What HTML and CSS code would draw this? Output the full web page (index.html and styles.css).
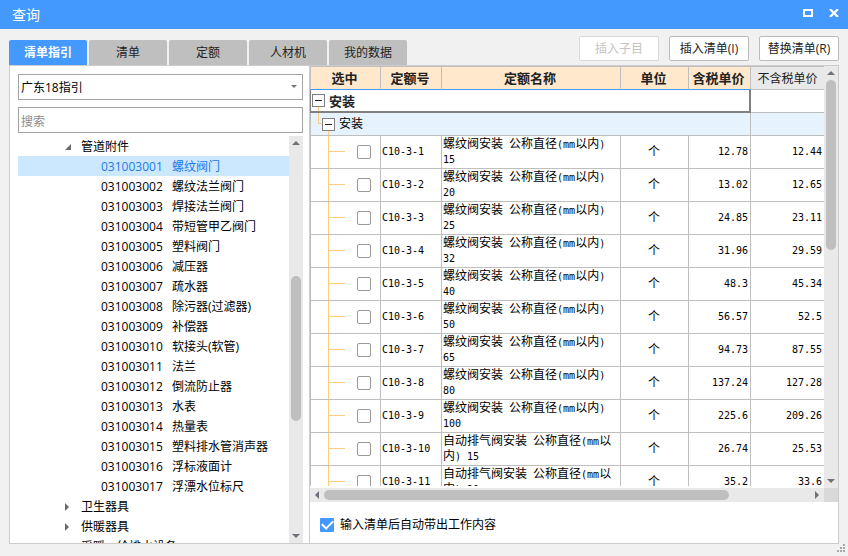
FILE: index.html
```
<!DOCTYPE html>
<html lang="zh-CN">
<head>
<meta charset="utf-8">
<title>查询</title>
<link rel="stylesheet" href="styles.css">
</head>
<body>
<header class="titlebar">
  <h1>查询</h1>
  <div class="window-buttons">
    <button type="button" aria-label="最大化"><svg width="10" height="8" viewBox="0 0 10 8"><path d="M1 1h8v6H1z" fill="none" stroke="#fff" stroke-width="2"/></svg></button>
    <button type="button" aria-label="关闭"><svg width="10" height="8" viewBox="0 0 10 8"><path d="M1 0l8 8M9 0L1 8" fill="none" stroke="#fff" stroke-width="2.2"/></svg></button>
  </div>
</header>
<div class="toolbar">
  <nav class="tabs">
    <button type="button" class="tab active">清单指引</button>
    <button type="button" class="tab">清单</button>
    <button type="button" class="tab">定额</button>
    <button type="button" class="tab">人材机</button>
    <button type="button" class="tab">我的数据</button>
  </nav>
  <div class="actions">
    <button type="button" class="btn" disabled>插入子目</button>
    <button type="button" class="btn">插入清单(I)</button>
    <button type="button" class="btn">替换清单(R)</button>
  </div>
</div>
<main class="panel">
  <section class="side">
    <div class="select-box">
      <select class="field" aria-label="指引"><option>广东18指引</option></select>
      <svg class="caret" width="6" height="3" viewBox="0 0 6 3"><path d="M0 0h6L3 3z" fill="#777"/></svg>
    </div>
    <input class="field" type="text" placeholder="搜索" aria-label="搜索">
    <div class="tree-box">
      <ul class="tree">
        <li class="branch"><svg width="7" height="7" viewBox="0 0 7 7"><path d="M6 0v6H0z" fill="#6b6b6b"/></svg>管道附件</li>
        <li class="leaf selected"><span class="code">031003001</span>螺纹阀门</li>
        <li class="leaf"><span class="code">031003002</span>螺纹法兰阀门</li>
        <li class="leaf"><span class="code">031003003</span>焊接法兰阀门</li>
        <li class="leaf"><span class="code">031003004</span>带短管甲乙阀门</li>
        <li class="leaf"><span class="code">031003005</span>塑料阀门</li>
        <li class="leaf"><span class="code">031003006</span>减压器</li>
        <li class="leaf"><span class="code">031003007</span>疏水器</li>
        <li class="leaf"><span class="code">031003008</span>除污器(过滤器)</li>
        <li class="leaf"><span class="code">031003009</span>补偿器</li>
        <li class="leaf"><span class="code">031003010</span>软接头(软管)</li>
        <li class="leaf"><span class="code">031003011</span>法兰</li>
        <li class="leaf"><span class="code">031003012</span>倒流防止器</li>
        <li class="leaf"><span class="code">031003013</span>水表</li>
        <li class="leaf"><span class="code">031003014</span>热量表</li>
        <li class="leaf"><span class="code">031003015</span>塑料排水管消声器</li>
        <li class="leaf"><span class="code">031003016</span>浮标液面计</li>
        <li class="leaf"><span class="code">031003017</span>浮漂水位标尺</li>
        <li class="branch"><svg width="7" height="8" viewBox="0 0 7 8"><path d="M0 0l4 4-4 4z" fill="#6b6b6b"/></svg>卫生器具</li>
        <li class="branch"><svg width="7" height="8" viewBox="0 0 7 8"><path d="M0 0l4 4-4 4z" fill="#6b6b6b"/></svg>供暖器具</li>
        <li class="branch"><svg width="7" height="8" viewBox="0 0 7 8"><path d="M0 0l4 4-4 4z" fill="#6b6b6b"/></svg>采暖、给排水设备</li>
      </ul>
      <div class="scroll vertical tree-scroll">
        <span class="arrow"><svg width="8" height="4" viewBox="0 0 8 4"><path d="M4 0l4 4H0z"/></svg></span>
        <span class="before"></span><span class="thumb"></span><span class="after"></span>
        <span class="arrow"><svg width="8" height="4" viewBox="0 0 8 4"><path d="M0 0h8L4 4z"/></svg></span>
      </div>
    </div>
  </section>
  <section class="content">
    <div class="grid-area">
      <div class="grid-clip">
        <table class="grid">
          <colgroup><col class="c-pick"><col class="c-code"><col class="c-name"><col class="c-unit"><col class="c-tax"><col class="c-net"></colgroup>
          <thead>
            <tr><th>选中</th><th>定额号</th><th>定额名称</th><th>单位</th><th>含税单价</th><th class="plain">不含税单价</th></tr>
          </thead>
          <tbody>
            <tr class="group top"><td colspan="5"><div class="node"><button type="button" class="toggle" aria-label="折叠"></button>安装</div></td><td></td></tr>
            <tr class="group sub"><td colspan="5"><div class="node"><button type="button" class="toggle" aria-label="折叠"></button>安装</div></td><td></td></tr>
            <tr><td class="pick"><input type="checkbox" aria-label="C10-3-1"></td><td class="mono">C10-3-1</td><td class="name">螺纹阀安装<i> </i>公称直径<i>(mm</i>以内<i>) 15</i></td><td class="unit">个</td><td class="num">12.78</td><td class="num">12.44</td></tr>
            <tr><td class="pick"><input type="checkbox" aria-label="C10-3-2"></td><td class="mono">C10-3-2</td><td class="name">螺纹阀安装<i> </i>公称直径<i>(mm</i>以内<i>) 20</i></td><td class="unit">个</td><td class="num">13.02</td><td class="num">12.65</td></tr>
            <tr><td class="pick"><input type="checkbox" aria-label="C10-3-3"></td><td class="mono">C10-3-3</td><td class="name">螺纹阀安装<i> </i>公称直径<i>(mm</i>以内<i>) 25</i></td><td class="unit">个</td><td class="num">24.85</td><td class="num">23.11</td></tr>
            <tr><td class="pick"><input type="checkbox" aria-label="C10-3-4"></td><td class="mono">C10-3-4</td><td class="name">螺纹阀安装<i> </i>公称直径<i>(mm</i>以内<i>) 32</i></td><td class="unit">个</td><td class="num">31.96</td><td class="num">29.59</td></tr>
            <tr><td class="pick"><input type="checkbox" aria-label="C10-3-5"></td><td class="mono">C10-3-5</td><td class="name">螺纹阀安装<i> </i>公称直径<i>(mm</i>以内<i>) 40</i></td><td class="unit">个</td><td class="num">48.3</td><td class="num">45.34</td></tr>
            <tr><td class="pick"><input type="checkbox" aria-label="C10-3-6"></td><td class="mono">C10-3-6</td><td class="name">螺纹阀安装<i> </i>公称直径<i>(mm</i>以内<i>) 50</i></td><td class="unit">个</td><td class="num">56.57</td><td class="num">52.5</td></tr>
            <tr><td class="pick"><input type="checkbox" aria-label="C10-3-7"></td><td class="mono">C10-3-7</td><td class="name">螺纹阀安装<i> </i>公称直径<i>(mm</i>以内<i>) 65</i></td><td class="unit">个</td><td class="num">94.73</td><td class="num">87.55</td></tr>
            <tr><td class="pick"><input type="checkbox" aria-label="C10-3-8"></td><td class="mono">C10-3-8</td><td class="name">螺纹阀安装<i> </i>公称直径<i>(mm</i>以内<i>) 80</i></td><td class="unit">个</td><td class="num">137.24</td><td class="num">127.28</td></tr>
            <tr><td class="pick"><input type="checkbox" aria-label="C10-3-9"></td><td class="mono">C10-3-9</td><td class="name">螺纹阀安装<i> </i>公称直径<i>(mm</i>以内<i>) 100</i></td><td class="unit">个</td><td class="num">225.6</td><td class="num">209.26</td></tr>
            <tr><td class="pick"><input type="checkbox" aria-label="C10-3-10"></td><td class="mono">C10-3-10</td><td class="name">自动排气阀安装<i> </i>公称直径<i>(mm</i>以内<i>) 15</i></td><td class="unit">个</td><td class="num">26.74</td><td class="num">25.53</td></tr>
            <tr><td class="pick"><input type="checkbox" aria-label="C10-3-11"></td><td class="mono">C10-3-11</td><td class="name">自动排气阀安装<i> </i>公称直径<i>(mm</i>以内<i>) 20</i></td><td class="unit">个</td><td class="num">35.2</td><td class="num">33.6</td></tr>
          </tbody>
        </table>
      </div>
      <div class="scroll vertical grid-scroll">
        <span class="arrow"><svg width="8" height="4" viewBox="0 0 8 4"><path d="M4 0l4 4H0z"/></svg></span>
        <span class="thumb"></span><span class="after"></span>
        <span class="arrow"><svg width="8" height="4" viewBox="0 0 8 4"><path d="M0 0h8L4 4z"/></svg></span>
      </div>
    </div>
    <div class="scroll-row">
      <div class="scroll horizontal">
        <span class="arrow"><svg width="4" height="8" viewBox="0 0 4 8"><path d="M4 0v8L0 4z"/></svg></span>
        <span class="thumb"></span><span class="after"></span>
        <span class="arrow"><svg width="4" height="8" viewBox="0 0 4 8"><path d="M0 0l4 4-4 4z"/></svg></span>
      </div>
      <span class="corner"></span>
    </div>
    <label class="option"><input type="checkbox" checked>输入清单后自动带出工作内容</label>
  </section>
</main>
<svg class="grip" width="8" height="8" viewBox="0 0 8 8"><path d="M6 0h2v2H6zM3 3h2v2H3zM6 3h2v2H6zM0 6h2v2H0zM3 6h2v2H3zM6 6h2v2H6z" fill="#a8a8a8"/></svg>
</body>
</html>
```
FILE: styles.css
```
* { box-sizing: border-box; }

body {
  margin: 0;
  height: 100vh;
  display: flex;
  flex-direction: column;
  overflow: hidden;
  position: relative;
  background: #f1f1f1;
  color: #000;
  font: 12px/20px "Open Sans", "Noto Sans CJK SC", sans-serif;
}

button, input, select { font: inherit; color: inherit; margin: 0; padding: 0; }
svg { display: block; }

.titlebar {
  flex: none;
  height: 29px;
  padding: 0 9px 0 12px;
  display: flex;
  align-items: center;
  justify-content: space-between;
  background: #4499ff;
  color: #fff;
}
.titlebar h1 { margin: 0; font-size: 14px; font-weight: 400; }
.window-buttons { display: flex; gap: 16px; padding-bottom: 3px; }
.window-buttons button { border: 0; background: none; }

.toolbar {
  flex: none;
  height: 36px;
  padding: 0 9px;
  display: flex;
  justify-content: space-between;
}
.tabs { display: flex; gap: 2px; align-items: flex-end; }
.tab {
  width: 78px;
  height: 25px;
  padding-top: 1px;
  border: 0;
  border-radius: 2px 2px 0 0;
  background: #bfbfbf;
  color: #222;
}
.tab.active { background: #4499ff; color: #fff; font-weight: 700; }
.actions { display: flex; gap: 10px; padding-top: 7px; }
.btn {
  width: 80px;
  height: 25px;
  border: 1px solid #bbb;
  border-radius: 2px;
  background: #fff;
  color: #222;
}
.btn:disabled { border-color: #d9d9d9; color: #c4c4c4; }

.panel {
  flex: 1;
  min-height: 0;
  margin: 0 9px 12px;
  display: flex;
  border: 1px solid #ccc;
  background: #fff;
}

.side {
  flex: none;
  width: 300px;
  padding: 8px 6px 0 8px;
  display: flex;
  flex-direction: column;
  border-right: 1px solid #ccc;
}
.select-box { position: relative; margin-bottom: 7px; }
.field {
  display: block;
  width: 100%;
  height: 26px;
  padding: 2px 2px 0;
  border: 1px solid #a3a3a3;
  border-radius: 0;
  background: #fff;
  appearance: none;
}
.field::placeholder { color: #8c8c8c; opacity: 1; }
.caret { position: absolute; right: 6px; top: 11px; }

.tree-box { flex: 1; min-height: 0; margin-top: 3px; display: flex; }
.tree { flex: 1; margin: 0; padding: 0; list-style: none; overflow: hidden; }
.tree li { height: 20px; padding-top: 2px; display: flex; align-items: center; white-space: nowrap; }
.branch { padding-left: 47px; gap: 9px; }
.leaf { padding-left: 83px; }
.code { width: 71px; }
.selected { background: #cce8ff; color: #2479ea; }

.scroll { flex: none; display: flex; background: #e9e9e9; }
.scroll path { fill: #70707a; }
.vertical { width: 14px; flex-direction: column; }
.horizontal { flex: 1; height: 14px; }
.arrow { flex: none; width: 14px; height: 14px; display: flex; align-items: center; justify-content: center; }
.thumb { border-radius: 5px; background: #bfbfbf; }
.vertical .thumb { margin: 0 2px; }
.horizontal .thumb { margin: 2px 0; flex: 405; }
.horizontal .after { flex: 81; }
.tree-scroll .before { flex: 126; }
.tree-scroll .thumb { flex: 145; }
.tree-scroll .after { flex: 108; }
.grid-scroll .thumb { flex: 170; }
.grid-scroll .after { flex: 224; }

.content { flex: 1; min-width: 0; display: flex; flex-direction: column; }
.grid-area { flex: 1; min-height: 0; display: flex; }
.grid-clip { flex: 1; min-width: 0; margin-bottom: 2px; overflow: hidden; }
.grid {
  width: 100%;
  table-layout: fixed;
  border-collapse: separate;
  border-spacing: 0;
}
.c-pick { width: 71px; }
.c-code { width: 61px; }
.c-unit { width: 68px; }
.c-tax { width: 62px; }
.c-net { width: 73px; }

.grid th {
  height: 24px;
  padding: 0 2px 0 0;
  border-top: 1px solid #bfbfbf;
  border-right: 1px solid #bfbfbf;
  border-bottom: 1px solid #4499ff;
  background: #ffe8cc;
  color: #222;
  font-size: 13px;
  line-height: 20px;
  white-space: nowrap;
}
.grid th.plain {
  padding: 2px 0 0;
  border-right: 0;
  border-bottom-color: #bfbfbf;
  background: #e9e9e9;
  font-size: 12px;
  font-weight: 400;
}
.grid td {
  height: 33px;
  padding: 0 2px 0 1px;
  border-right: 1px solid #bfbfbf;
  border-bottom: 1px solid #bfbfbf;
  line-height: 14px;
}
.grid td:last-child { border-right: 0; }
.grid th:first-child, .grid td:first-child { border-left: 1px solid #bfbfbf; }

.grid .group td { height: 23px; padding: 0; }
.node { height: 22px; display: flex; align-items: center; gap: 4px; }
.top .node {
  height: 21px;
  padding-left: 1px;
  background: linear-gradient(#ffcc80, #ffcc80) 7px 17px / 1px 4px no-repeat;
  color: #222;
  font-size: 13px;
  font-weight: 700;
}
.grid .top td:first-child { border-color: #808080; border-width: 0 2px 2px 1px; }
.sub td { background: #e6f3ff; }
.sub .node {
  padding-left: 11px;
  background:
    linear-gradient(#ffcc80, #ffcc80) 7px 0 / 1px 11px no-repeat,
    linear-gradient(#ffcc80, #ffcc80) 7px 10px / 5px 1px no-repeat,
    linear-gradient(#ffcc80, #ffcc80) 17px 17px / 1px 5px no-repeat;
}
.toggle {
  width: 13px;
  height: 13px;
  border: 1px solid #808080;
  background: linear-gradient(#222, #222) center / 7px 1px no-repeat #fff;
}

.grid .pick {
  padding: 0 0 0 46px;
  background:
    linear-gradient(#ffcc80, #ffcc80) 17px 0 / 1px 100% no-repeat,
    linear-gradient(#ffcc80, #ffcc80) 17px 15px / 17px 1px no-repeat;
}
.pick input {
  display: block;
  width: 14px;
  height: 14px;
  border: 1px solid #999;
  border-radius: 2px;
  background: #fff;
  appearance: none;
}
.mono, .num, .name i { font-family: "DejaVu Sans Mono", monospace; font-size: 10px; font-style: normal; }
.unit { text-align: center; }
.num { text-align: right; }

.scroll-row { flex: none; display: flex; }
.corner { width: 14px; height: 14px; background: #d9d9d9; }

.option {
  flex: none;
  height: 41px;
  padding: 5px 0 0 10px;
  display: flex;
  align-items: center;
  gap: 6px;
}
.option input {
  width: 14px;
  height: 14px;
  border-radius: 1px;
  background: #4499ff;
  appearance: none;
  display: flex;
  align-items: center;
  justify-content: center;
}
.option input::before {
  content: "";
  flex: none;
  width: 9px;
  height: 5px;
  margin-bottom: 3px;
  border: solid #fff;
  border-width: 0 0 2px 2px;
  transform: rotate(-45deg);
}

.grip { position: absolute; right: 3px; bottom: 4px; }
```
